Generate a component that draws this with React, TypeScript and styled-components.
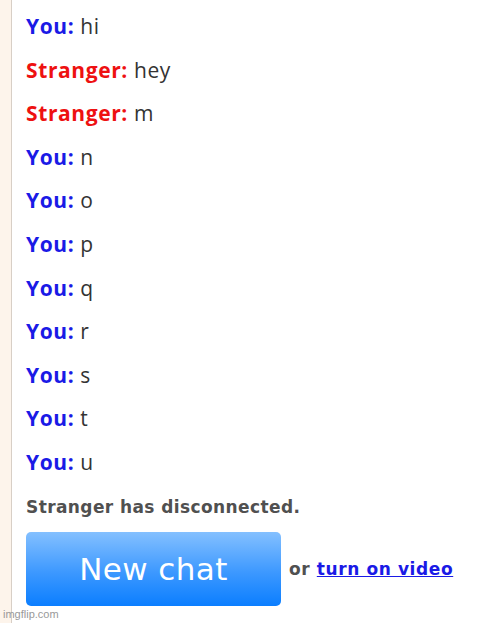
import React from 'react';
import styled, { createGlobalStyle } from 'styled-components';

const Global = createGlobalStyle`
  html, body {
    margin: 0;
    padding: 0;
    background: #fff;
  }
`;

type Sender = 'you' | 'stranger';

const messages: { from: Sender; text: string }[] = [
  { from: 'you', text: 'hi' },
  { from: 'stranger', text: 'hey' },
  { from: 'stranger', text: 'm' },
  { from: 'you', text: 'n' },
  { from: 'you', text: 'o' },
  { from: 'you', text: 'p' },
  { from: 'you', text: 'q' },
  { from: 'you', text: 'r' },
  { from: 'you', text: 's' },
  { from: 'you', text: 't' },
  { from: 'you', text: 'u' },
];

export default function App() {
  return (
    <>
      <Global />
      <Page>
        <Gutter />
        <ChatLog>
          {messages.map((m, i) => (
            <Row key={i}>
              <Who $from={m.from}>{m.from === 'you' ? 'You:' : 'Stranger:'}</Who> {m.text}
            </Row>
          ))}
          <Status>Stranger has disconnected.</Status>
          <Actions>
            <NewChat>New chat</NewChat>
            <Or>
              or <VideoLink href="#">turn on video</VideoLink>
            </Or>
          </Actions>
        </ChatLog>
        <Watermark>imgflip.com</Watermark>
      </Page>
    </>
  );
}

const Page = styled.div`
  position: relative;
  display: flex;
  width: 500px;
  height: 623px;
  overflow: hidden;
  background: #fff;
`;

const Gutter = styled.div`
  width: 11px;
  flex: none;
  background: #fdf4eb;
  border-right: 1px solid #d8cfc6;
`;

const ChatLog = styled.div`
  flex: 1;
  padding: 5px 0 0 14px;
  font-family: 'Open Sans', 'Noto Sans', sans-serif;
`;

const Row = styled.div`
  height: 43.6px;
  line-height: 43.6px;
  font-size: 21px;
  letter-spacing: 0.6px;
  color: #333;
  white-space: nowrap;
`;

const Who = styled.strong<{ $from: Sender }>`
  font-weight: 700;
  color: ${(p) => (p.$from === 'you' ? '#1a1ae6' : '#ee1111')};
`;

const Status = styled.div`
  height: 30px;
  line-height: 30px;
  margin-top: 7px;
  font-family: 'DejaVu Sans', sans-serif;
  font-size: 17px;
  letter-spacing: 0.4px;
  font-weight: 700;
  color: #505050;
`;

const Actions = styled.div`
  display: flex;
  align-items: center;
  gap: 8px;
  margin-top: 10px;
`;

const NewChat = styled.button`
  width: 255px;
  height: 74px;
  border: none;
  border-radius: 5px;
  background: linear-gradient(to bottom, #84c0ff 0%, #3c98ff 55%, #0b7eff 100%);
  color: #fff;
  font-family: 'DejaVu Sans', sans-serif;
  font-size: 31px;
  letter-spacing: 0.4px;
  cursor: pointer;
`;

const Or = styled.span`
  font-family: 'DejaVu Sans', sans-serif;
  font-size: 17px;
  letter-spacing: 0.6px;
  font-weight: 700;
  color: #505050;
`;

const VideoLink = styled.a`
  color: #1a1ae6;
  text-decoration: underline;
`;

const Watermark = styled.div`
  position: absolute;
  left: 3px;
  bottom: 3px;
  font-family: 'Liberation Sans', sans-serif;
  font-size: 11px;
  color: #999;
`;
